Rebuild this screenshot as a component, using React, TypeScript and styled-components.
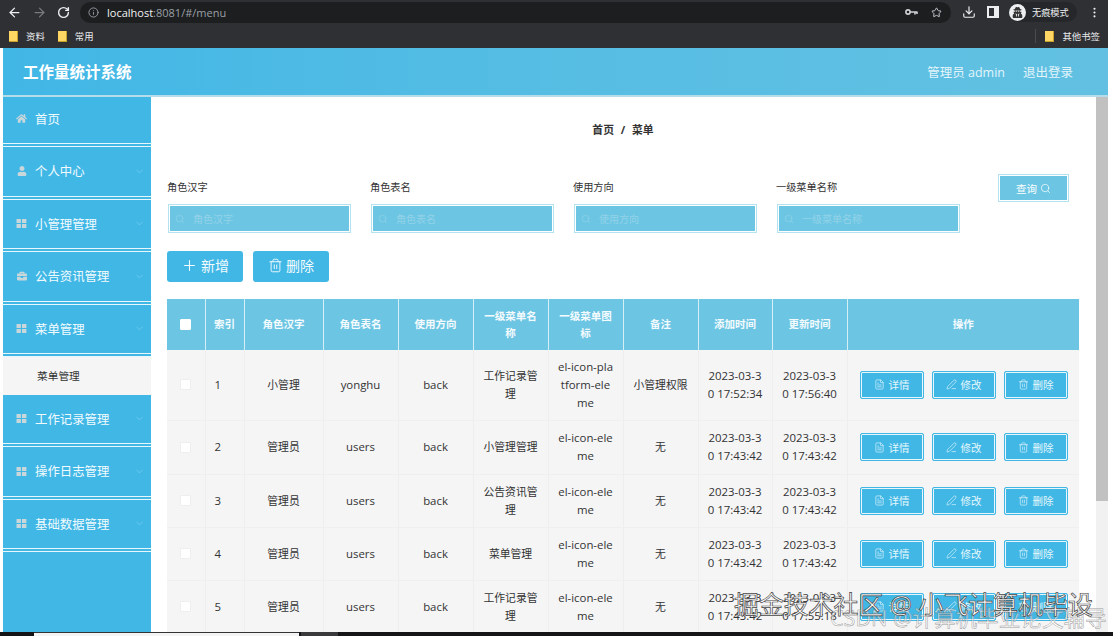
import React from 'react'
import styled, { createGlobalStyle } from 'styled-components'
import { ArrowLeft, ArrowRight, RotateCw, Info, Star, Download, ChevronDown, Plus, Trash2, Search, FileText, PenLine, EllipsisVertical } from 'lucide-react'
import { FaHome, FaUser, FaBriefcase, FaUserSecret } from 'react-icons/fa'

const GlobalStyle = createGlobalStyle`
    html, body {
        margin: 0;
        padding: 0;
        background: #fff;
    }
    * {
        box-sizing: border-box;
    }
`

const CJK = `"Open Sans", "Noto Sans CJK SC", sans-serif`

const Screen = styled.div`
    width: 1113px;
    height: 636px;
    position: relative;
    overflow: hidden;
    display: flex;
    flex-direction: column;
    background: #fff;
    font-family: ${CJK};
`

const Toolbar = styled.div`
    height: 24px;
    flex: none;
    margin-right: 5px;
    display: flex;
    align-items: center;
    background: #2f3033;
    color: #e8eaed;
    padding: 0 0 0 7px;
`

const NavButton = styled.span<{ $dim?: boolean }>`
    width: 25px;
    display: flex;
    color: ${props => props.$dim ? '#777a7e' : '#eceef0'};
`

const AddressBar = styled.div`
    width: 871px;
    height: 21px;
    margin-left: -2px;
    border-radius: 11px;
    background: #1d1e20;
    display: flex;
    align-items: center;
    padding: 0 9px 0 8px;
    font-size: 11px;
    color: #9aa0a6;
`

const Host = styled.span`
    color: #f1f3f4;
    margin-left: 8px;
`

const AddressRight = styled.span`
    margin-left: auto;
    display: flex;
    align-items: center;
    gap: 13px;
    color: #cfd2d6;
`

const ToolIcons = styled.div`
    display: flex;
    align-items: center;
    margin-left: 11px;
    gap: 11px;
    color: #eceef0;
`

const PanelIcon = styled.span`
    width: 12px;
    height: 12px;
    border: 2px solid #eceef0;
    border-right-width: 5px;
    background: #2f3033;
`

const Incognito = styled.span`
    display: flex;
    align-items: center;
    gap: 6px;
    width: 68px;
    font-size: 9.2px;
    color: #eceef0;
    margin-left: -1px;
    background: #26272a;
    border-radius: 10px;
    height: 20px;
`

const IncognitoBadge = styled.span`
    width: 17px;
    height: 17px;
    flex: none;
    border-radius: 50%;
    background: #eceef0;
    color: #333;
    display: flex;
    align-items: center;
    justify-content: center;
`

const BookmarkBar = styled.div`
    height: 24px;
    flex: none;
    margin-right: 5px;
    display: flex;
    align-items: center;
    background: #2f3033;
    color: #e8eaed;
    font-size: 9.4px;
    padding: 0 8px 0 9px;
`

const Bookmark = styled.span`
    display: flex;
    align-items: center;
    gap: 8px;
    margin-right: 13px;
`

const BookmarkFolder = styled.span`
    width: 9px;
    height: 11px;
    background: #fdd663;
    border-right: 1px solid #c79f2b;
    border-bottom: 1px solid #c79f2b;
`

const OtherBookmarks = styled(Bookmark)`
    margin: 0 0 0 auto;
    padding-left: 9px;
    border-left: 1px solid #4a4b4f;
`

const Page = styled.div`
    flex: 1;
    min-height: 0;
    margin: 0 5px 4px 3px;
    display: flex;
    flex-direction: column;
`

const TaskStrip = styled.div`
    position: absolute;
    left: 0;
    right: 0;
    bottom: 0;
    height: 4px;
    display: flex;
    padding-left: 34px;
    background: #151517;
`

const TaskWindow = styled.span`
    width: 265px;
    background: #f4f4f4;
    border-top: 1px solid #333;
`

const TaskTab = styled.span`
    width: 37px;
    margin-left: 2px;
    background: #3a3a3c;
`

const Header = styled.header`
    height: 49px;
    flex: none;
    display: flex;
    align-items: center;
    padding: 0 35px 0 20px;
    color: #fff;
    background: linear-gradient(90deg, #41b7e6 0%, #56bde3 50%, #62c1e2 100%);
    border-bottom: 2px solid #b4dde9;
`

const Logo = styled.div`
    font-size: 15.5px;
    font-weight: 700;
    margin-right: auto;
`

const HeaderLink = styled.span`
    font-size: 12.5px;
    color: #e3f5fb;
    margin-left: 18px;
`

const Body = styled.div`
    flex: 1;
    min-height: 0;
    display: flex;
`

const Sidebar = styled.nav`
    width: 148px;
    flex: none;
    background: #41b7e6;
`

const MenuItem = styled.div<{ $first?: boolean }>`
    height: ${props => props.$first ? 50 : 52.5}px;
    padding-bottom: ${props => props.$first ? 3 : 0}px;
    display: flex;
    align-items: center;
    padding-left: 13px;
    padding-right: 6px;
    color: #f1fbfe;
    font-size: 12.4px;
    border-bottom: 4px double #e8f7fc;
`

const MenuIcon = styled.span`
    width: 11px;
    margin-right: 8px;
    display: flex;
    justify-content: center;
    color: #c9d6da;
`

const Chevron = styled(ChevronDown)`
    margin-left: auto;
    color: #8ad5f0;
`

const SubMenuItem = styled.div`
    height: 37.5px;
    display: flex;
    align-items: center;
    padding-left: 34px;
    font-size: 10.7px;
    color: #333;
    background: #f5f5f5;
`

const Main = styled.main`
    flex: 1;
    min-width: 0;
    padding: 0 17px 0 16px;
    overflow: hidden;
`

const Breadcrumb = styled.div`
    height: 66px;
    padding-top: 24px;
    text-align: center;
    font-size: 10.8px;
    font-weight: 700;
    color: #333;
    word-spacing: 4px;
`

const SearchRow = styled.div`
    display: flex;
    align-items: flex-start;
    height: 88px;
    padding-top: 11px;
`

const Field = styled.div`
    width: 203px;
`

const FieldLabel = styled.label`
    display: block;
    height: 30px;
    font-size: 10.2px;
    line-height: 27px;
    color: #333;
`

const SearchInput = styled.div`
    width: 183px;
    height: 29px;
    margin-left: 1px;
    display: flex;
    align-items: center;
    padding-left: 6px;
    gap: 8px;
    font-size: 10px;
    color: #93d2e8;
    background: #6cc6e3;
    border: 1px solid #b5e2f1;
    box-shadow: inset 0 0 0 1px #fff;
`

const QueryButton = styled.button`
    width: 71px;
    height: 28px;
    margin: 0 0 0 19px;
    padding: 0;
    display: flex;
    align-items: center;
    justify-content: center;
    gap: 3px;
    font-family: inherit;
    font-size: 10.5px;
    color: #fff;
    background: #6cc6e3;
    border: 1px solid #b5e2f1;
    box-shadow: inset 0 0 0 1px #fff;
`

const ActionRow = styled.div`
    display: flex;
    gap: 10px;
    height: 48px;
`

const ActionButton = styled.button`
    width: 76px;
    height: 31px;
    padding: 0 0 3px;
    display: flex;
    align-items: center;
    justify-content: center;
    gap: 3px;
    font-family: inherit;
    font-size: 14px;
    color: #f2fbfe;
    background: #41b7e6;
    border: none;
    border-radius: 3px;
`

const Table = styled.table`
    width: 912px;
    table-layout: fixed;
    border-collapse: collapse;
`

const HeadCell = styled.th`
    height: 51px;
    padding: 0 8px;
    font-size: 10.5px;
    line-height: 17px;
    font-weight: 700;
    color: #f4fbfe;
    background: #6cc5e3;
    border-left: 1px solid #d5eff7;
    text-align: center;
    &:first-child {
        border-left: none;
    }
`

const Row = styled.tr<{ $h: number }>`
    height: ${props => props.$h}px;
`

const Cell = styled.td<{ $left?: boolean; $latin?: boolean }>`
    padding: 0 9px;
    font-size: ${props => props.$latin ? 11.4 : 10.8}px;
    line-height: 18px;
    color: #333;
    background: #f5f5f6;
    border-left: 1px solid #eeeeef;
    border-bottom: 1px solid #efeff0;
    text-align: ${props => props.$left ? 'left' : 'center'};
    word-break: break-all;
    &:first-child {
        border-left: none;
    }
`

const Check = styled.span<{ $head?: boolean }>`
    display: block;
    width: 11px;
    height: 11px;
    margin: 0 auto;
    border-radius: 1px;
    background: #fff;
    border: 1px solid ${props => props.$head ? '#fff' : '#eceef0'};
`

const OpCell = styled(Cell)`
    padding: 0 0 0 12px;
`

const OpButtons = styled.div`
    display: flex;
    gap: 8px;
`

const OpButton = styled.button`
    width: 64px;
    height: 28px;
    padding: 0;
    display: flex;
    align-items: center;
    justify-content: center;
    gap: 4px;
    font-family: inherit;
    font-size: 10.5px;
    color: #e6f7fc;
    background: #41b7e6;
    border: 1px solid #41b7e6;
    border-radius: 2px;
    box-shadow: inset 0 0 0 1px #e6f6fb;
`

const ScrollTrack = styled.div`
    width: 12px;
    flex: none;
    background: #f1f1f1;
`

const ScrollThumb = styled.div`
    height: 404px;
    background: #c1c1c1;
`

const Watermark = styled.div`
    position: absolute;
    left: 734px;
    top: 587px;
    font-size: 24.9px;
    line-height: 34px;
    white-space: nowrap;
    color: #fff;
    -webkit-text-stroke: 0.7px #444;
`

const WatermarkBack = styled.div`
    position: absolute;
    left: 830px;
    top: 604px;
    font-size: 21.6px;
    line-height: 28px;
    white-space: nowrap;
    color: rgba(255, 255, 255, 0.55);
    -webkit-text-stroke: 0.5px rgba(110, 110, 110, 0.7);
`

const GridIcon: React.FC = () => (
    <svg width="11" height="11" viewBox="0 0 11 11" fill="currentColor">
        <rect x="0.5" y="1" width="4.4" height="4" />
        <rect x="6" y="1" width="4.4" height="4" />
        <rect x="0.5" y="6" width="4.4" height="4" />
        <rect x="6" y="6" width="4.4" height="4" />
    </svg>
)

const KeyIcon: React.FC = () => (
    <svg width="13" height="8" viewBox="0 0 13 8" fill="none" stroke="currentColor" strokeWidth="1.6">
        <circle cx="3" cy="4" r="2.1" />
        <path d="M5 4h7.5M10 4v2.5M12 4v2" />
    </svg>
)

const columns = [38, 39, 79, 75, 75, 75, 75, 75, 74, 75, 232]
const headers = ['索引', '角色汉字', '角色表名', '使用方向', '一级菜单名称', '一级菜单图标', '备注', '添加时间', '更新时间', '操作']

const rows = [
    { h: 70, id: 1, name: '小管理', table: 'yonghu', menu: '工作记录管理', icon: 'el-icon-platform-eleme', note: '小管理权限', add: '2023-03-30 17:52:34', update: '2023-03-30 17:56:40' },
    { h: 54, id: 2, name: '管理员', table: 'users', menu: '小管理管理', icon: 'el-icon-eleme', note: '无', add: '2023-03-30 17:43:42', update: '2023-03-30 17:43:42' },
    { h: 53, id: 3, name: '管理员', table: 'users', menu: '公告资讯管理', icon: 'el-icon-eleme', note: '无', add: '2023-03-30 17:43:42', update: '2023-03-30 17:43:42' },
    { h: 53, id: 4, name: '管理员', table: 'users', menu: '菜单管理', icon: 'el-icon-eleme', note: '无', add: '2023-03-30 17:43:42', update: '2023-03-30 17:43:42' },
    { h: 53, id: 5, name: '管理员', table: 'users', menu: '工作记录管理', icon: 'el-icon-eleme', note: '无', add: '2023-03-30 17:43:42', update: '2023-03-30 17:55:18' },
]

const menus = [
    { text: '个人中心', icon: <FaUser size={10} /> },
    { text: '小管理管理', icon: <GridIcon /> },
    { text: '公告资讯管理', icon: <FaBriefcase size={10} /> },
    { text: '菜单管理', icon: <GridIcon /> },
]

const lowerMenus = ['工作记录管理', '操作日志管理', '基础数据管理']

const fields = ['角色汉字', '角色表名', '使用方向', '一级菜单名称']

const App: React.FC = () => (
    <Screen>
        <GlobalStyle />
        <Toolbar>
            <NavButton><ArrowLeft size={15} /></NavButton>
            <NavButton $dim><ArrowRight size={15} /></NavButton>
            <NavButton><RotateCw size={13} strokeWidth={2.6} /></NavButton>
            <AddressBar>
                <Info size={11} />
                <Host>localhost</Host>:8081/#/menu
                <AddressRight>
                    <KeyIcon />
                    <Star size={11} />
                </AddressRight>
            </AddressBar>
            <ToolIcons>
                <Download size={14} />
                <PanelIcon />
                <Incognito>
                    <IncognitoBadge><FaUserSecret size={11} /></IncognitoBadge>
                    无痕模式
                </Incognito>
                <EllipsisVertical size={13} />
            </ToolIcons>
        </Toolbar>
        <BookmarkBar>
            <Bookmark><BookmarkFolder />资料</Bookmark>
            <Bookmark><BookmarkFolder />常用</Bookmark>
            <OtherBookmarks><BookmarkFolder />其他书签</OtherBookmarks>
        </BookmarkBar>
        <Page>
            <Header>
                <Logo>工作量统计系统</Logo>
                <HeaderLink>管理员 admin</HeaderLink>
                <HeaderLink>退出登录</HeaderLink>
            </Header>
            <Body>
                <Sidebar>
                    <MenuItem $first>
                        <MenuIcon><FaHome size={11} /></MenuIcon>
                        首页
                    </MenuItem>
                    {menus.map(item => (
                        <MenuItem key={item.text}>
                            <MenuIcon>{item.icon}</MenuIcon>
                            {item.text}
                            <Chevron size={11} strokeWidth={1.2} />
                        </MenuItem>
                    ))}
                    <SubMenuItem>菜单管理</SubMenuItem>
                    {lowerMenus.map(text => (
                        <MenuItem key={text}>
                            <MenuIcon><GridIcon /></MenuIcon>
                            {text}
                            <Chevron size={11} strokeWidth={1.2} />
                        </MenuItem>
                    ))}
                </Sidebar>
                <Main>
                    <Breadcrumb>首页 / 菜单</Breadcrumb>
                    <SearchRow>
                        {fields.map(label => (
                            <Field key={label}>
                                <FieldLabel>{label}</FieldLabel>
                                <SearchInput>
                                    <Search size={10} strokeWidth={1.5} />
                                    {label}
                                </SearchInput>
                            </Field>
                        ))}
                        <QueryButton>查询<Search size={11} strokeWidth={1.5} /></QueryButton>
                    </SearchRow>
                    <ActionRow>
                        <ActionButton><Plus size={17} strokeWidth={1.5} />新增</ActionButton>
                        <ActionButton><Trash2 size={15} strokeWidth={1.5} />删除</ActionButton>
                    </ActionRow>
                    <Table>
                        <colgroup>
                            {columns.map((w, i) => <col key={i} style={{ width: w }} />)}
                        </colgroup>
                        <thead>
                            <tr>
                                <HeadCell><Check $head /></HeadCell>
                                {headers.map(text => <HeadCell key={text}>{text}</HeadCell>)}
                            </tr>
                        </thead>
                        <tbody>
                            {rows.map(row => (
                                <Row key={row.id} $h={row.h}>
                                    <Cell><Check /></Cell>
                                    <Cell $left $latin>{row.id}</Cell>
                                    <Cell>{row.name}</Cell>
                                    <Cell $latin>{row.table}</Cell>
                                    <Cell $latin>back</Cell>
                                    <Cell>{row.menu}</Cell>
                                    <Cell $latin>{row.icon}</Cell>
                                    <Cell>{row.note}</Cell>
                                    <Cell $latin>{row.add}</Cell>
                                    <Cell $latin>{row.update}</Cell>
                                    <OpCell>
                                        <OpButtons>
                                            <OpButton><FileText size={11} strokeWidth={1.4} />详情</OpButton>
                                            <OpButton><PenLine size={11} strokeWidth={1.4} />修改</OpButton>
                                            <OpButton><Trash2 size={11} strokeWidth={1.4} />删除</OpButton>
                                        </OpButtons>
                                    </OpCell>
                                </Row>
                            ))}
                        </tbody>
                    </Table>
                </Main>
                <ScrollTrack><ScrollThumb /></ScrollTrack>
            </Body>
        </Page>
        <TaskStrip>
            <TaskWindow />
            <TaskTab />
        </TaskStrip>
        <WatermarkBack>CSDN @计算机毕业论文辅导</WatermarkBack>
        <Watermark>掘金技术社区 @ 小飞计算机毕设</Watermark>
    </Screen>
)

export default App
